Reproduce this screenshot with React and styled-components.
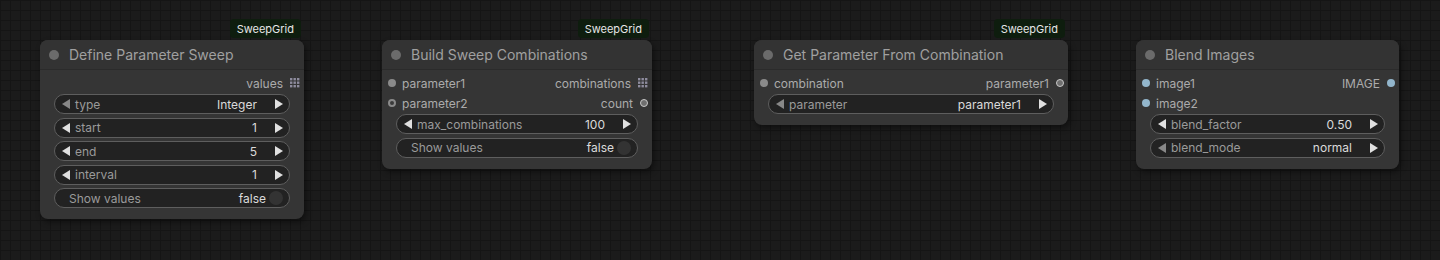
import React from "react";
import styled, { createGlobalStyle } from "styled-components";

const Global = createGlobalStyle`
  html, body { margin: 0; padding: 0; }
  body {
    width: 1440px;
    height: 260px;
    overflow: hidden;
    font-family: Inter, "Liberation Sans", Arial, sans-serif;
    background-color: #1b1b1b;
    background-image:
      linear-gradient(to right, #151515 1px, transparent 1px),
      linear-gradient(to bottom, #151515 1px, transparent 1px);
    background-size: 10px 10px;
    background-position: 0 0;
  }
`;

const Canvas = styled.div`
  position: relative;
  width: 1440px;
  height: 260px;
`;

const NodeBox = styled.div`
  position: absolute;
  box-sizing: border-box;
  background: #353535;
  border-radius: 8px;
  box-shadow: 2px 3px 6px rgba(0, 0, 0, 0.45);
  display: flex;
  flex-direction: column;
`;

const Badge = styled.div`
  position: absolute;
  right: 3px;
  top: -21px;
  height: 19px;
  padding: 0 7px;
  display: flex;
  align-items: center;
  background: #0e1d0e;
  color: #e6e6e6;
  font-size: 11px;
  border-radius: 4px;
  white-space: nowrap;
`;

const Title = styled.div`
  height: 29px;
  border-bottom: 1px solid #2b2b2b;
  background: #333;
  border-radius: 8px 8px 0 0;
  display: flex;
  align-items: center;
  gap: 10px;
  padding-left: 9px;
  color: #a0a0a0;
  font-size: 14px;
`;

const TitleDot = styled.span`
  width: 10px;
  height: 10px;
  border-radius: 50%;
  background: #6b6b6b;
`;

const Body = styled.div`
  padding: 3px 0 11px;
  display: flex;
  flex-direction: column;
`;

const SlotRow = styled.div`
  height: 20px;
  display: flex;
  align-items: center;
  justify-content: space-between;
  padding: 0 4px 0 6px;
  font-size: 12px;
  color: #ababab;
`;

const SlotSide = styled.div`
  display: flex;
  align-items: center;
  gap: ${(p) => (p.$out ? "7px" : "6px")};
`;

const Dot = styled.span`
  box-sizing: border-box;
  width: 8px;
  height: 8px;
  border-radius: 50%;
  background: ${(p) => (p.$hollow ? "#3a3a3a" : p.$color)};
  border: ${(p) =>
    p.$hollow
      ? `2px solid ${p.$color}`
      : p.$ring
      ? `1px solid #c8c8c8`
      : "none"};
`;

const Widgets = styled.div`
  margin: 1px 14px 0;
  display: flex;
  flex-direction: column;
  gap: 3.5px;
`;

const Widget = styled.div`
  box-sizing: border-box;
  height: 20px;
  border: 1px solid #5e5e5e;
  background: #222;
  border-radius: 10px;
  display: flex;
  align-items: center;
  font-size: 12px;
  padding: 0 6px 0 ${(p) => (p.$toggle ? "14px" : "7px")};
`;

const Label = styled.span`
  color: #9a9a9a;
  margin-left: ${(p) => (p.$arrow ? "5px" : "0")};
  flex: 1;
`;

const Value = styled.span`
  color: #dadada;
  margin-right: ${(p) => (p.$toggle ? "3px" : "18px")};
`;

const ToggleKnob = styled.span`
  width: 14px;
  height: 14px;
  border-radius: 50%;
  background: #333;
`;

const Arrow = ({ dir, dim }) => (
  <svg width="8" height="10" viewBox="0 0 8 10" style={{ display: "block" }}>
    <polygon
      points={dir === "left" ? "8,0 0,5 8,10" : "0,0 8,5 0,10"}
      fill={dim ? "#888" : "#e0e0e0"}
    />
  </svg>
);

const GridIcon = () => (
  <svg width="10" height="10" viewBox="0 0 10 10" style={{ display: "block" }}>
    {[0, 1, 2].map((r) =>
      [0, 1, 2].map((c) => (
        <rect
          key={`${r}${c}`}
          x={c * 3.5}
          y={r * 3.5}
          width="2.4"
          height="2.4"
          fill="#8e8c9e"
        />
      ))
    )}
  </svg>
);

const ComboWidget = ({ label, value, dimLeft }) => (
  <Widget>
    <Arrow dir="left" dim={dimLeft} />
    <Label $arrow>{label}</Label>
    <Value>{value}</Value>
    <Arrow dir="right" />
  </Widget>
);

const ToggleWidget = ({ label, value }) => (
  <Widget $toggle>
    <Label>{label}</Label>
    <Value $toggle>{value}</Value>
    <ToggleKnob />
  </Widget>
);

const InSlot = ({ name, color = "#8a8a8a", hollow }) => (
  <SlotSide>
    <Dot $color={color} $hollow={hollow} />
    <span>{name}</span>
  </SlotSide>
);

const OutSlot = ({ name, color = "#6f6f6f", grid, ring }) => (
  <SlotSide $out>
    <span>{name}</span>
    {grid ? <GridIcon /> : <Dot $color={color} $ring={ring} />}
  </SlotSide>
);

const Node = ({ x, y, w, title, badge, slots, widgets }) => (
  <NodeBox style={{ left: x, top: y, width: w }}>
    {badge && <Badge>{badge}</Badge>}
    <Title>
      <TitleDot />
      <span>{title}</span>
    </Title>
    <Body>
      {slots.map((s, i) => (
        <SlotRow key={i}>
          {s.in ? <InSlot {...s.in} /> : <span />}
          {s.out ? <OutSlot {...s.out} /> : <span />}
        </SlotRow>
      ))}
      <Widgets>
        {widgets.map((w, i) =>
          w.toggle ? (
            <ToggleWidget key={i} label={w.label} value={w.value} />
          ) : (
            <ComboWidget
              key={i}
              label={w.label}
              value={w.value}
              dimLeft={w.dimLeft}
            />
          )
        )}
      </Widgets>
    </Body>
  </NodeBox>
);

const IMG = "#93b6cc";

const nodes = [
  {
    x: 40,
    y: 40,
    w: 264,
    title: "Define Parameter Sweep",
    badge: "SweepGrid",
    slots: [{ out: { name: "values", grid: true } }],
    widgets: [
      { label: "type", value: "Integer", dimLeft: true },
      { label: "start", value: "1" },
      { label: "end", value: "5" },
      { label: "interval", value: "1" },
      { label: "Show values", value: "false", toggle: true },
    ],
  },
  {
    x: 382,
    y: 40,
    w: 270,
    title: "Build Sweep Combinations",
    badge: "SweepGrid",
    slots: [
      { in: { name: "parameter1" }, out: { name: "combinations", grid: true } },
      { in: { name: "parameter2", hollow: true }, out: { name: "count", ring: true } },
    ],
    widgets: [
      { label: "max_combinations", value: "100" },
      { label: "Show values", value: "false", toggle: true },
    ],
  },
  {
    x: 754,
    y: 40,
    w: 314,
    title: "Get Parameter From Combination",
    badge: "SweepGrid",
    slots: [
      { in: { name: "combination" }, out: { name: "parameter1", ring: true } },
    ],
    widgets: [{ label: "parameter", value: "parameter1", dimLeft: true }],
  },
  {
    x: 1136,
    y: 40,
    w: 263,
    title: "Blend Images",
    slots: [
      { in: { name: "image1", color: IMG }, out: { name: "IMAGE", color: IMG } },
      { in: { name: "image2", color: IMG } },
    ],
    widgets: [
      { label: "blend_factor", value: "0.50" },
      { label: "blend_mode", value: "normal", dimLeft: true },
    ],
  },
];

export default function App() {
  return (
    <>
      <Global />
      <Canvas>
        {nodes.map((n, i) => (
          <Node key={i} {...n} />
        ))}
      </Canvas>
    </>
  );
}
